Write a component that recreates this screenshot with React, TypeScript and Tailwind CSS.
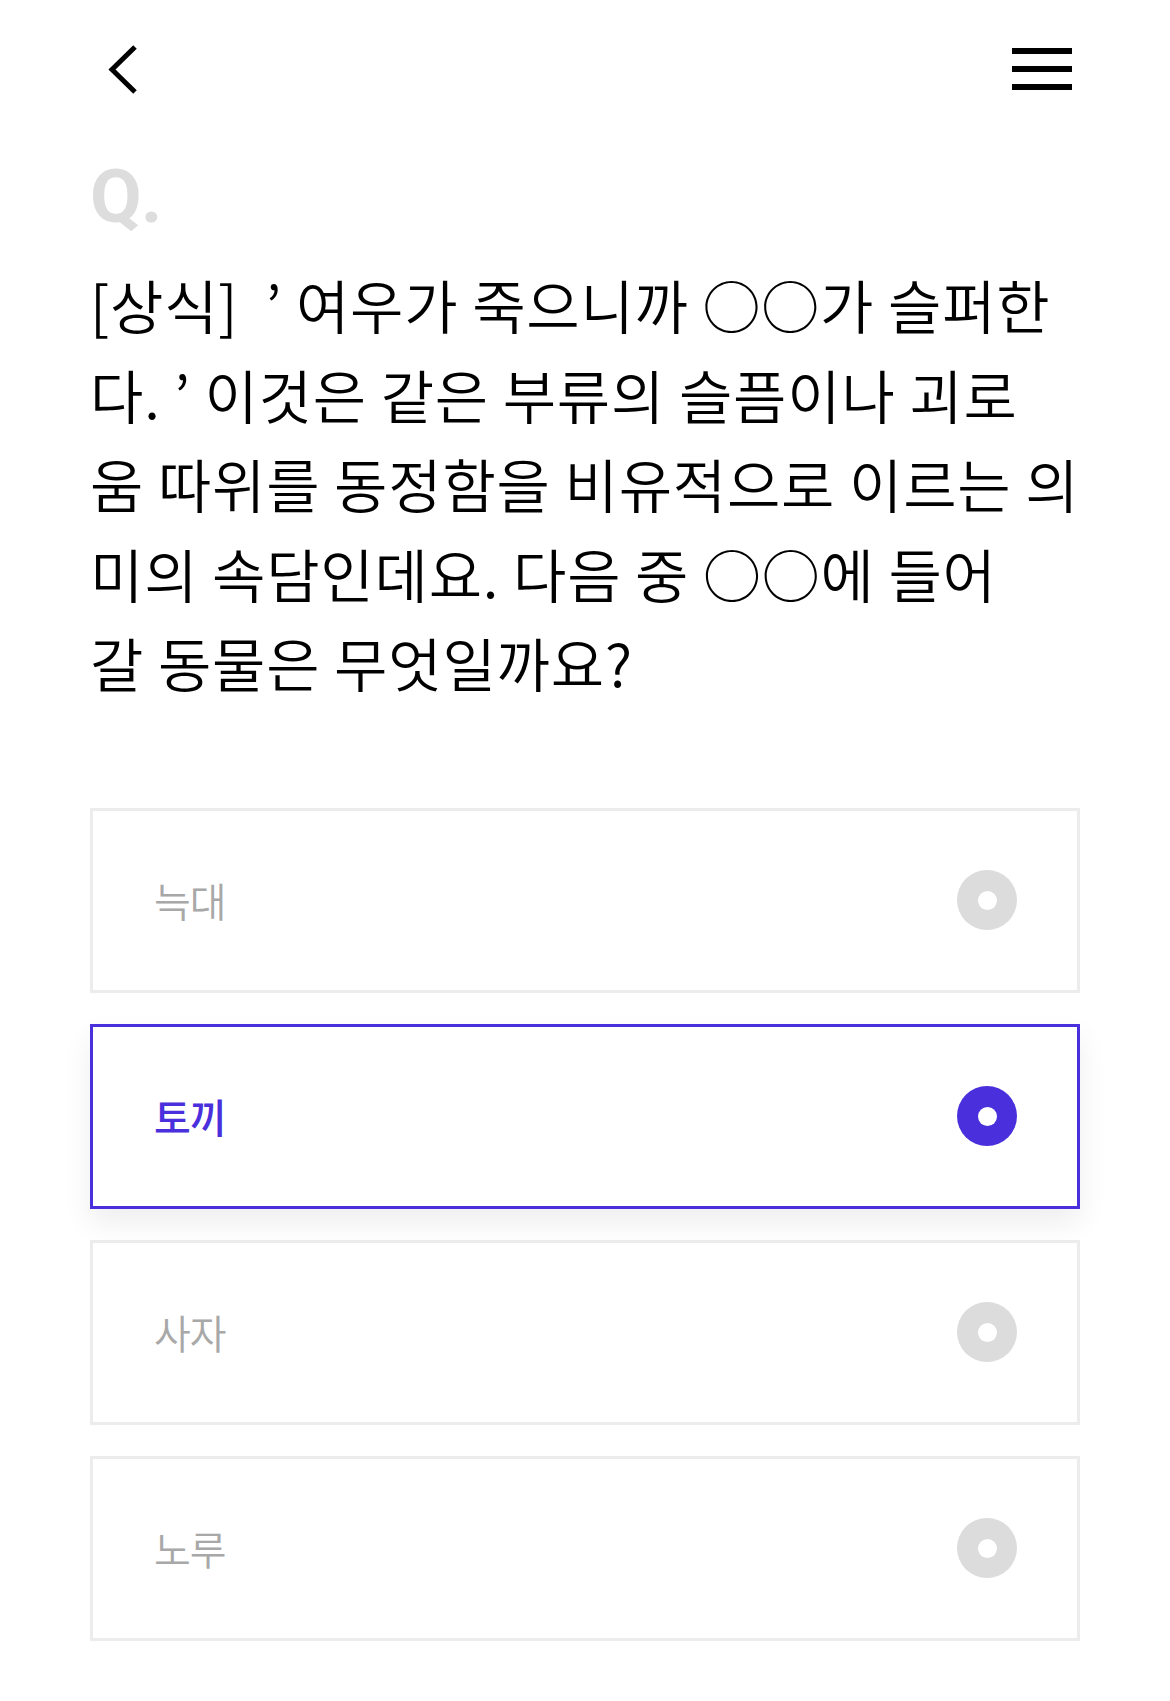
import React from "react";

const options = [
  { label: "늑대", selected: false },
  { label: "토끼", selected: true },
  { label: "사자", selected: false },
  { label: "노루", selected: false },
];

export default function App() {
  return (
    <div
      className="w-full min-h-[1701px] bg-white px-[90px]"
      style={{ fontFamily: '"Noto Sans CJK KR", "Noto Sans", sans-serif' }}
    >
      <header className="flex items-start justify-between pt-[44px] h-[138px]">
        <button className="ml-[17px] block" aria-label="back">
          <svg width="32" height="52" viewBox="0 0 32 52" fill="none">
            <path d="M28 3 L5 25.5 L28 48" stroke="#000" strokeWidth="5" strokeLinejoin="miter" />
          </svg>
        </button>
        <button className="mt-[4px] mr-[6px] flex w-[62px] flex-col gap-[12px]" aria-label="menu">
          <span className="block h-[6px] w-[60px] bg-black" />
          <span className="block h-[6px] w-[60px] bg-black" />
          <span className="block h-[6px] w-[60px] bg-black" />
        </button>
      </header>

      <div
        className="mt-[22px] text-[75px] font-bold leading-[72px] text-[#dddddd] tracking-[-1px]"
        style={{ fontFamily: 'Roboto, "Noto Sans", sans-serif' }}
      >
        Q.
      </div>

      <p className="mt-[28px] text-[58px] font-[350] leading-[89.5px] tracking-[0.8px] text-black">
        <span className="block whitespace-pre">[상식]  ’ 여우가 죽으니까 ○○가 슬퍼한</span>
        <span className="block whitespace-pre">다. ’ 이것은 같은 부류의 슬픔이나 괴로</span>
        <span className="block whitespace-pre">움 따위를 동정함을 비유적으로 이르는 의</span>
        <span className="block whitespace-pre">미의 속담인데요. 다음 중 ○○에 들어</span>
        <span className="block whitespace-pre">갈 동물은 무엇일까요?</span>
      </p>

      <div className="mt-[100px] flex flex-col gap-[31px]">
        {options.map((o) => (
          <div
            key={o.label}
            className={
              o.selected
                ? "flex h-[185px] items-center justify-between border-[3px] border-[#4a30dc] bg-white pl-[61px] pr-[60px] shadow-[0_14px_28px_rgba(0,0,0,0.07)]"
                : "flex h-[185px] items-center justify-between border-[3px] border-[#ececec] bg-white pl-[61px] pr-[60px]"
            }
          >
            <span
              className={
                o.selected
                  ? "text-[40px] font-medium tracking-[-1px] text-[#4a30dc]"
                  : "text-[40px] font-[350] tracking-[-1px] text-[#a8a8a8]"
              }
            >
              {o.label}
            </span>
            <span
              className={
                o.selected
                  ? "flex h-[60px] w-[60px] items-center justify-center rounded-full bg-[#4a30dc]"
                  : "flex h-[60px] w-[60px] items-center justify-center rounded-full bg-[#dcdcdc]"
              }
            >
              <span className="block h-[19px] w-[19px] rounded-full bg-white" />
            </span>
          </div>
        ))}
      </div>
    </div>
  );
}
